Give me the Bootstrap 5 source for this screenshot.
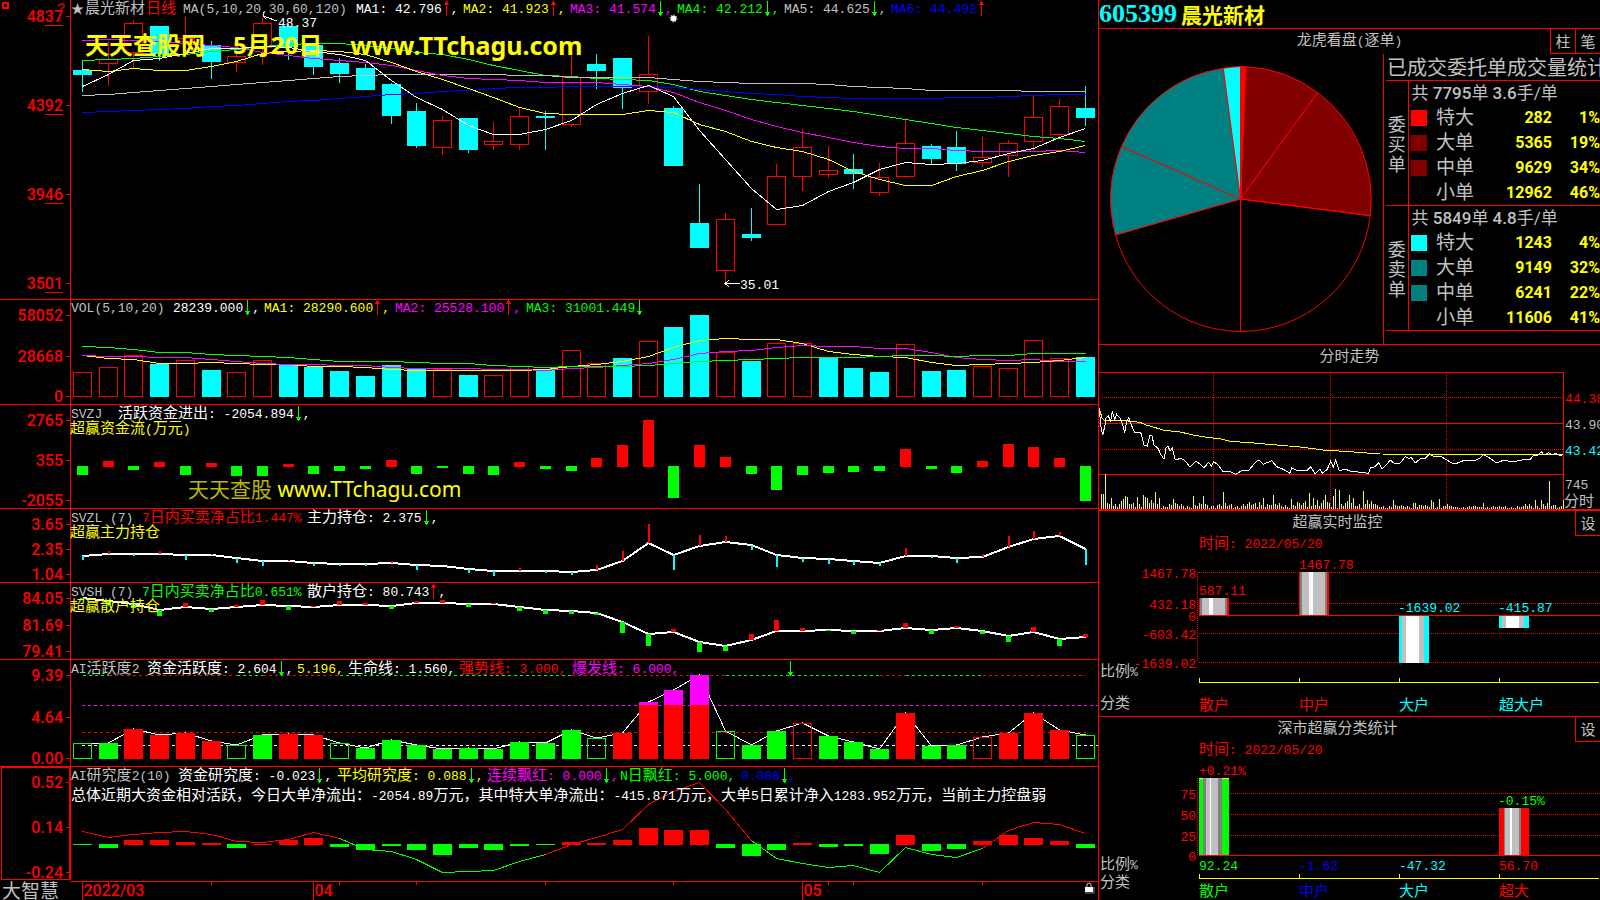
<!DOCTYPE html>
<html lang="zh-CN">
<head>
<meta charset="utf-8">
<meta name="viewport" content="width=device-width, initial-scale=1">
<title>605399 晨光新材</title>
<link rel="stylesheet" href="https://cdn.jsdelivr.net/npm/bootstrap@5.3.0/dist/css/bootstrap.min.css">
<style>
  :root { --line: #f00; --silver: #c0c0c0; }
  body { background: #000; color: var(--silver); font: 13px/16px "Liberation Mono", "Noto Sans CJK SC", monospace; }
  .desk { display: grid; grid-template-columns: 1099fr 501fr; grid-template-rows: minmax(0, 1fr); }
  .left-side { display: grid; grid-template-rows: 299fr 105fr 104fr 74fr 77fr 107fr 114fr 20fr; border-right: 1px solid var(--line); min-width: 0; }
  .right-side { display: grid; grid-template-rows: 28fr 316fr 166fr 206fr 184fr; min-width: 0; }
  .pane { position: relative; overflow: hidden; min-height: 0; min-width: 0; }
  .left-side > .pane + .pane, .right-side > .pane + .pane { border-top: 1px solid var(--line); }
  .left-side > .timebar.pane { border-top-color: transparent; }
  .plot { position: absolute; inset: 0; width: 100%; height: 100%; display: block; overflow: hidden; }
  .plot line, .plot rect, .plot polyline { shape-rendering: crispEdges; }
  .han { font-size: 15px; font-family: "Noto Sans CJK SC", sans-serif; line-height: 14px; }
  .axis { font: 500 16px Roboto, "Liberation Sans", sans-serif; fill: #f00; }
  .legend-row { position: relative; display: grid; align-items: baseline; padding-left: 71px; height: 17px; line-height: 17px; white-space: pre; }
  .sub-row { position: relative; padding-left: 70px; line-height: 14px; margin-top: -2px; white-space: pre; }
  .note-row { position: relative; padding-left: 71px; margin-top: 3px; line-height: 16px; white-space: pre; color: #fff; }
  .lg-k { grid-template-columns: 14px 61px 37px 173px repeat(6, 107px); }
  .lg-vol { grid-template-columns: 102px 91px repeat(3, 131px); }
  .lg-zj { grid-template-columns: 47px 1fr; }
  .lg-zl { grid-template-columns: 71px 165px 1fr; }
  .lg-a1 { grid-template-columns: 76px 150px 51px 111px 113px 214px 1fr; }
  .lg-a2 { grid-template-columns: 107px 159px 150px 133px 121px 1fr; }
  .arw { width: 9px; height: 15px; vertical-align: -3px; }
  .cy { color: #ff0; } .cm { color: #f0f; } .cg { color: #0f0; } .cw { color: #fff; } .cb { color: #00f; } .cr { color: #f00; } .cc { color: #0ff; }
  .mark-big { position: absolute; top: 28px; left: 85px; font: 700 24px/34px "Noto Sans", "Noto Sans CJK SC", sans-serif; color: #ff0; white-space: pre; }
  .mark-big .site { font-size: 25px; }
  .mark-small { position: absolute; bottom: 4px; left: 188px; font: 21px/30px "Noto Sans", "Noto Sans CJK SC", sans-serif; color: #ff0; white-space: pre; }
  .mark-small span { color: #b8b800; }
  .code-no { font: 700 26px/28px "Liberation Serif", serif; }
  .code-name { font: 700 21px/28px "Noto Sans CJK SC", sans-serif; }
  .brand { font: 19px/18px "Noto Sans CJK SC", sans-serif; position: relative; padding-left: 2px; }
  .head-row { position: relative; line-height: 25px; height: 25px; flex-shrink: 0; }
  .sq { width: 25px; height: 25px; padding: 0; background: #000; color: var(--silver); border: 1px solid var(--line); border-top: 0; border-right: 0; font: 15px/22px "Noto Sans CJK SC", sans-serif; }
  .stats { width: 217px; flex-shrink: 0; border-left: 1px solid var(--line); overflow: hidden; }
  .stats h2 { font: 20px/25px "Noto Sans CJK SC", sans-serif; margin: 0; padding-left: 3px; height: 26px; white-space: nowrap; }
  .orders { width: 214px; margin-left: 2px; table-layout: fixed; border-collapse: collapse; font: 500 16px/24px Roboto, "Noto Sans CJK SC", sans-serif; }
  .orders tr { height: 25px; }
  .orders tbody { border-top: 1px solid var(--line); border-bottom: 1px solid var(--line); }
  .orders td, .orders th { padding: 0; line-height: 24px; white-space: nowrap; }
  .orders .side { font: 18px/20px "Noto Sans CJK SC", sans-serif; text-align: center; vertical-align: middle; border-right: 1px solid var(--line); white-space: normal; }
  .orders .sum { font-size: 17px; font-weight: 400; padding-left: 3px; }
  .orders .sum b { font-weight: 500; }
  .orders .kind { font-size: 19px; font-weight: 400; padding-left: 6px; }
  .orders .num { color: #ff0; text-align: right; font-weight: 700; }
  .chip { display: block; width: 16px; height: 16px; margin-left: 2px; }
</style>
</head>
<body>
<svg width="0" height="0" class="position-absolute" aria-hidden="true">
  <symbol id="up" viewBox="0 0 7 15"><path d="M3 0h1v15h-1zM2 1h3v2h-3zM1 3h5v1h-5z" fill="#f00"/></symbol>
  <symbol id="dn" viewBox="0 0 7 15"><path d="M3 0h1v15h-1zM2 12h3v2h-3zM1 11h5v1h-5z" fill="#0f0"/></symbol>
</svg>

<main class="desk vh-100 overflow-hidden">
  <div class="left-side">
    <section class="pane" aria-label="日线">
      <svg class="plot" id="kline"></svg>
      <div class="legend-row lg-k">
        <span>★</span><span class="han">晨光新材</span><span class="han cr">日线</span><span>MA(5,10,20,30,60,120)</span>
        <span class="cw">MA1: 42.796<svg class="arw"><use href="#up"/></svg>,</span>
        <span class="cy">MA2: 41.923<svg class="arw"><use href="#up"/></svg>,</span>
        <span class="cm">MA3: 41.574<svg class="arw"><use href="#dn"/></svg>,</span>
        <span class="cg">MA4: 42.212<svg class="arw"><use href="#dn"/></svg>,</span>
        <span>MA5: 44.625<svg class="arw"><use href="#dn"/></svg>,</span>
        <span class="cb">MA6: 44.492<svg class="arw"><use href="#up"/></svg></span>
      </div>
      <div class="mark-big d-flex"><span class="me-4 pe-1">天天查股网</span><span class="me-4 pe-1">5月20日</span><span class="site">www.TTchagu.com</span></div>
    </section>

    <section class="pane" aria-label="成交量">
      <svg class="plot" id="vol"></svg>
      <div class="legend-row lg-vol">
        <span>VOL(5,10,20)</span><span class="cw">28239.000<svg class="arw"><use href="#dn"/></svg>,</span>
        <span class="cy">MA1: 28290.600<svg class="arw"><use href="#up"/></svg>,</span>
        <span class="cm">MA2: 25528.100<svg class="arw"><use href="#up"/></svg>,</span>
        <span class="cg">MA3: 31001.449<svg class="arw"><use href="#dn"/></svg></span>
      </div>
    </section>

    <section class="pane" aria-label="超赢资金流">
      <svg class="plot" id="flow"></svg>
      <div class="legend-row lg-zj"><span>SVZJ</span><span class="cw"><span class="han">活跃资金进出</span>: -2054.894<svg class="arw"><use href="#dn"/></svg>,</span></div>
      <div class="sub-row cy"><span class="han">超赢资金流</span>(<span class="han">万元</span>)</div>
      <div class="mark-small"><span>天天查股</span> www.TTchagu.com</div>
    </section>

    <section class="pane" aria-label="超赢主力持仓">
      <svg class="plot" id="main"></svg>
      <div class="legend-row lg-zl"><span>SVZL (7)</span><span class="cr">7<span class="han">日内买卖净占比</span>1.447%</span><span class="cw"><span class="han">主力持仓</span>: 2.375<svg class="arw"><use href="#dn"/></svg>,</span></div>
      <div class="sub-row cy"><span class="han">超赢主力持仓</span></div>
    </section>

    <section class="pane" aria-label="超赢散户持仓">
      <svg class="plot" id="retail"></svg>
      <div class="legend-row lg-zl"><span>SVSH (7)</span><span class="cg">7<span class="han">日内买卖净占比</span>0.651%</span><span class="cw"><span class="han">散户持仓</span>: 80.743<svg class="arw"><use href="#up"/></svg>,</span></div>
      <div class="sub-row cy"><span class="han">超赢散户持仓</span></div>
    </section>

    <section class="pane" aria-label="AI活跃度">
      <svg class="plot" id="active"></svg>
      <div class="legend-row lg-a1">
        <span>AI<span class="han">活跃度</span>2</span>
        <span class="cw"><span class="han">资金活跃度</span>: 2.604<svg class="arw"><use href="#dn"/></svg>,</span>
        <span class="cy">5.196,</span>
        <span class="cw"><span class="han">生命线</span>: 1.560,</span>
        <span class="cr"><span class="han">强势线</span>: 3.000,</span>
        <span class="cm"><span class="han">爆发线</span>: 6.000,</span>
        <span><svg class="arw"><use href="#dn"/></svg></span>
      </div>
    </section>

    <section class="pane" aria-label="AI研究度">
      <svg class="plot" id="study"></svg>
      <div class="legend-row lg-a2">
        <span>AI<span class="han">研究度</span>2(10)</span>
        <span class="cw"><span class="han">资金研究度</span>: -0.023<svg class="arw"><use href="#dn"/></svg>,</span>
        <span class="cy"><span class="han">平均研究度</span>: 0.088<svg class="arw"><use href="#dn"/></svg>,</span>
        <span class="cm"><span class="han">连续飘红</span>: 0.000<svg class="arw"><use href="#dn"/></svg>,</span>
        <span class="cg">N<span class="han">日飘红</span>: 5.000,</span>
        <span class="cb">0.088<svg class="arw"><use href="#dn"/></svg>,</span>
      </div>
      <div class="note-row"><span class="han">总体近期大资金相对活跃，今日大单净流出：</span>-2054.89<span class="han">万元，其中特大单净流出：</span>-415.871<span class="han">万元，大单</span>5<span class="han">日累计净入</span>1283.952<span class="han">万元，当前主力控盘弱</span></div>
    </section>

    <footer class="pane timebar">
      <svg class="plot" id="dates"></svg>
      <div class="brand">大智慧</div>
    </footer>
  </div>

  <div class="right-side">
    <header class="pane d-flex"><span class="code-no cc">605399</span><span class="code-name cy ps-1">晨光新材</span></header>

    <section class="pane d-flex flex-column">
      <div class="head-row text-center"><span class="han">龙虎看盘</span>(<span class="han">逐单</span>)
        <div class="position-absolute top-0 end-0 d-flex"><button type="button" class="sq">柱</button><button type="button" class="sq">笔</button></div>
      </div>
      <div class="d-flex flex-grow-1 overflow-hidden">
        <div class="flex-grow-1 overflow-hidden">
          <svg viewBox="0 0 284 290" class="d-block w-100 h-100" stroke="#f00" fill="none">
            <path fill="#f00" d="M141.5 145V12.5L147 12.7Z"/>
            <path fill="#800000" d="M141.5 145 147 12.7A130.5 132.5 0 0 1 218.7 38.7Z"/>
            <path fill="#800000" d="M141.5 145 218.7 38.7A130.5 132.5 0 0 1 271.3 161.7Z"/>
            <path d="M141.5 145 271.3 161.7A130.5 132.5 0 0 1 141.5 277.5Z"/>
            <path d="M141.5 145V277.5A130.5 132.5 0 0 1 16.5 181Z"/>
            <path fill="#008080" d="M141.5 145 16.5 181A130.5 132.5 0 0 1 22.5 92.5Z"/>
            <path fill="#008080" d="M141.5 145 22.5 92.5A130.5 132.5 0 0 1 124.3 14.3Z"/>
            <path fill="#0ff" d="M141.5 145 124.3 14.3A130.5 132.5 0 0 1 141.5 12.5Z"/>
            <path stroke-width="2" d="M142 13V145"/>
          </svg>
        </div>
        <div class="stats">
          <h2>已成交委托单成交量统计</h2>
          <table class="orders">
            <colgroup><col style="width:22px"><col style="width:22px"><col><col style="width:72px"><col style="width:48px"></colgroup>
            <tbody>
              <tr><th class="side" rowspan="5">委<br>买<br>单</th><th class="sum" colspan="4">共 <b>7795</b>单 <b>3.6</b>手/单</th></tr>
              <tr><td><i class="chip" style="background:#f00"></i></td><th class="kind">特大</th><td class="num">282</td><td class="num">1%</td></tr>
              <tr><td><i class="chip" style="background:#800000"></i></td><th class="kind">大单</th><td class="num">5365</td><td class="num">19%</td></tr>
              <tr><td><i class="chip" style="background:#800000"></i></td><th class="kind">中单</th><td class="num">9629</td><td class="num">34%</td></tr>
              <tr><td></td><th class="kind">小单</th><td class="num">12962</td><td class="num">46%</td></tr>
            </tbody>
            <tbody>
              <tr><th class="side" rowspan="5">委<br>卖<br>单</th><th class="sum" colspan="4">共 <b>5849</b>单 <b>4.8</b>手/单</th></tr>
              <tr><td><i class="chip" style="background:#0ff"></i></td><th class="kind">特大</th><td class="num">1243</td><td class="num">4%</td></tr>
              <tr><td><i class="chip" style="background:#008080"></i></td><th class="kind">大单</th><td class="num">9149</td><td class="num">32%</td></tr>
              <tr><td><i class="chip" style="background:#008080"></i></td><th class="kind">中单</th><td class="num">6241</td><td class="num">22%</td></tr>
              <tr><td></td><th class="kind">小单</th><td class="num">11606</td><td class="num">41%</td></tr>
            </tbody>
          </table>
        </div>
      </div>
    </section>

    <section class="pane" aria-label="分时走势">
      <svg class="plot" id="intraday"></svg>
      <div class="head-row text-center"><span class="han">分时走势</span></div>
    </section>

    <section class="pane" aria-label="超赢实时监控">
      <svg class="plot" id="monitor"></svg>
      <div class="head-row text-center pe-4"><span class="han">超赢实时监控</span>
        <button type="button" class="sq position-absolute top-0 end-0">设</button>
      </div>
    </section>

    <section class="pane" aria-label="深市超赢分类统计">
      <svg class="plot" id="sector"></svg>
      <div class="head-row text-center pe-4"><span class="han">深市超赢分类统计</span>
        <button type="button" class="sq position-absolute top-0 end-0">设</button>
      </div>
    </section>
  </div>
</main>

<script src="https://cdn.jsdelivr.net/npm/bootstrap@5.3.0/dist/js/bootstrap.bundle.min.js"></script>
<script>
const RED = '#f00', GREEN = '#0f0', CYAN = '#0ff', YEL = '#ff0', MAG = '#f0f', BLUE = '#00f', WHITE = '#fff', SILVER = '#c0c0c0', GREY = '#808080';
const charts = [];

// Each chart is drawn in its own units (box = x, y, width, height) and scaled to the pane; text keeps its size.
function chart(id, box, draw) { charts.push({ el: document.getElementById(id), box, draw }); }
function pen(el, [x0, y0, w, h]) {
  const sx = el.clientWidth / w, sy = el.clientHeight / h;
  const X = x => +((x - x0) * sx).toFixed(1), Y = y => +((y - y0) * sy).toFixed(1);
  let out = '';
  return {
    line(a, b, c, d, col, dash, sw) { out += `<line x1="${X(a)}" y1="${Y(b)}" x2="${X(c)}" y2="${Y(d)}" stroke="${col}" stroke-width="${sw || 1}"${dash ? ` stroke-dasharray="${dash}"` : ''}/>`; },
    fill(a, b, ww, hh, col) { out += `<rect x="${X(a)}" y="${Y(b)}" width="${(ww * sx).toFixed(1)}" height="${Math.max(1, hh * sy).toFixed(1)}" fill="${col}"/>`; },
    box(a, b, ww, hh, col) { out += `<rect x="${X(a)}" y="${Y(b)}" width="${(ww * sx).toFixed(1)}" height="${Math.max(1, hh * sy).toFixed(1)}" fill="none" stroke="${col}"/>`; },
    path(pts, col, sw) { out += `<polyline points="${pts.map(p => X(p[0]) + ',' + Y(p[1])).join(' ')}" fill="none" stroke="${col}" stroke-width="${sw || 1}"/>`; },
    axis(t, x, y, anchor) { out += `<text class="axis" x="${X(x)}" y="${Y(y) + 6}" text-anchor="${anchor || 'end'}">${t}</text>`; },
    text(t, x, y, col, anchor) {
      const body = t.replace(/[\u4e00-\u9fff]+/g, s => `<tspan class="han">${s}</tspan>`);
      out += `<text x="${X(x)}" y="${Y(y) + 5}" fill="${col}" text-anchor="${anchor || 'start'}">${body}</text>`;
    },
    raw(s) { out += s; }, X, Y,
    done() { el.innerHTML = out; }
  };
}
const cx = i => Math.round(82.5 + i * 25.715 - 0.5) + 0.5;
const series = ys => ys.map((y, i) => [cx(i), y]);
function scale(p, top, bottom, marks) {
  p.line(70.5, top, 70.5, bottom, RED);
  marks.forEach(([t, y]) => { p.axis(t, 63, y); p.line(66, y + 0.5, 70, y + 0.5, RED); });
}

// top, bottom, high, low, up?
const candles = [[70,75,60,92,0],[59,63,41,86,1],[23,52,20,68,1],[26,54,26,61,0],[38,41,17,42,1],[45,62,41,79,0],[56,62,54,72,1],[23,47,17,65,1],[26,47,24,60,0],[45,67,45,75,0],[63,74,58,83,0],[68,90,64,90,0],[84,116,83,124,0],[111,146,103,148,0],[120,147,116,155,1],[118,150,118,153,0],[141,144,122,150,1],[116,144,107,150,1],[116,118,111,150,0],[77,124,53,127,1],[64,71,54,89,0],[58,88,58,109,0],[74,91,36,104,1],[108,166,106,166,0],[223,248,184,248,0],[219,270,213,283,1],[234,238,208,241,0],[176,224,164,224,1],[147,176,129,191,1],[170,174,146,178,1],[169,174,154,189,0],[177,192,163,196,1],[143,176,118,178,1],[146,159,144,164,0],[147,164,131,171,0],[157,162,136,167,1],[143,155,140,177,1],[117,141,96,150,1],[106,134,99,137,1],[108,118,86,126,0]];
const ma = {
  [GREEN]: [60,59,58,56,54,51,49,46,44,43,43,45,48,52,54,59,65,70,75,76,78,79,80,84,91,95,99,102,105,108,111,115,119,123,127,130,133,136,138,141],
  [SILVER]: [95,94,92,90,88,86,84,82,80,78,76,75,74,74,74,74,74,75,75,77,77,77,77,79,81,82,83,83,83,84,86,87,88,90,90,90,90,91,91,91],
  [BLUE]: [112,111,110,109,108,106,105,103,101,100,98,96,94,93,91,90,88,87,87,86,86,86,86,87,89,91,93,94,96,97,98,98,98,98,97,97,96,95,94,94],
  [MAG]: [40,39,40,41,43,45,47,52,55,58,60,62,65,70,75,78,79,80,82,82,82,84,86,92,102,110,119,126,132,137,142,146,148,148,150,151,151,151,150,152],
  [YEL]: [69,71,68,70,70,66,61,53,51,50,51,54,62,71,79,88,97,107,113,114,114,114,110,112,124,131,141,147,151,159,171,179,185,185,176,170,161,155,151,145],
  [WHITE]: [86,74,60,58,53,48,48,46,47,51,54,60,80,97,109,125,134,134,129,120,104,93,85,96,130,159,188,209,205,191,182,169,162,164,163,160,153,148,137,128]
};
chart('kline', [0, 0, 1098, 299], p => {
  scale(p, 0, 299, [['4837',16],['4392',105],['3946',194],['3501',283]]);
  [16,105,194,283].forEach(y => p.line(45, y + 9.5, 63, y + 9.5, RED));
  p.raw(`<rect x="3" y="3" width="5" height="5" fill="none" stroke="#f00" stroke-width="2"/><text x="57" y="13" fill="#c00000" style="font:bold 14px 'Liberation Mono'">?</text>`);
  candles.forEach(([t, b, h, l, up], i) => {
    const x = cx(i);
    if (up) { p.line(x, h, x, t, RED); p.line(x, b, x, l, RED); p.box(x - 9, t + .5, 18, b - t, RED); }
    else { p.line(x, h, x, l, CYAN); p.fill(x - 9.5, t, 19, b - t, CYAN); }
  });
  Object.entries(ma).forEach(([c, ys]) => p.path(series(ys.map(y => y + .5)), c));
  p.path([[277,21],[263,16]], WHITE); p.path([[264,12],[263,16],[266,19]], WHITE);
  p.text('48.37', 278, 22, WHITE);
  p.path([[740,283.5],[725,283.5]], WHITE); p.path([[729,280],[725,283.5],[729,287]], WHITE);
  p.text('35.01', 740, 284, WHITE);
  const sx = p.X(673.5), sy = p.Y(18.5);
  p.raw(`<circle cx="${sx}" cy="${sy}" r="3" fill="#fff"/><circle cx="${sx}" cy="${sy}" r="3.5" fill="none" stroke="#fff" stroke-dasharray="1 1.7"/>`);
});

// 1 = outlined rising day, 0 = solid falling day
const volUp = '1110101100000010110110100101100010011110';
const volH = [25,30,42,33,37,27,25,37,33,30,26,21,32,28,28,22,22,31,28,47,34,39,56,70,82,45,36,54,54,39,29,25,53,26,27,31,29,57,39,40];
const volMa = {
  [YEL]: [355,358,359,363,363,362,363,364,364,366,366,367,369,370,370,370,370,370,369,366,364,361,356,347,340,338,339,339,343,351,354,356,357,362,365,364,363,362,360,357],
  [MAG]: [355,356,356,357,357,359,361,363,364,364,365,365,367,368,368,368,369,369,370,368,367,365,363,359,353,351,350,347,345,346,346,348,348,352,357,359,360,359,361,361],
  [GREEN]: [346,347,349,352,352,354,355,356,357,359,361,361,361,362,363,363,365,366,367,366,366,366,365,363,361,360,359,358,357,357,357,356,355,355,356,355,355,353,353,353]
};
chart('vol', [0, 300, 1098, 104], p => {
  scale(p, 299, 404, [['58052',315],['28668',356],['0',396]]);
  volH.forEach((h, i) => volUp[i] === '1' ? p.box(cx(i) - 9, 396.5 - h + 1, 18, h - 1, RED) : p.fill(cx(i) - 9.5, 397 - h, 19, h, CYAN));
  Object.entries(volMa).forEach(([c, ys]) => p.path(series(ys.map(y => y + .5)), c));
});

chart('flow', [0, 405, 1098, 103], p => {
  scale(p, 404, 508, [['2765',420],['355',460],['-2055',500]]);
  [-9,6,-4,5,-9,4,-10,-10,3,-8,-5,-3,7,-8,-2,-8,-9,5,-3,-5,9,22,47,-32,22,10,-8,-24,-9,-7,-6,-5,18,-3,-7,6,23,20,9,-35]
    .forEach((v, i) => v > 0 ? p.fill(cx(i) - 5.5, 467 - v, 11, v, RED) : p.fill(cx(i) - 5.5, 466, 11, -v, GREEN));
});

const mainY = [556,554,554,554,555,555,558,561,561,563,564,564,563,565,566,569,571,571,571,572,570,561,543,555,546,542,545,555,558,559,561,563,556,556,558,557,547,539,536,549];
const mainD = [-3,3,-1,3,-4,1,-4,-4,1,-2,-1,-1,2,-4,0,-3,-4,3,-1,-2,5,10,19,-14,11,6,-4,-11,-3,-4,-3,-2,8,-1,-4,3,11,8,4,-15];
chart('main', [0, 509, 1098, 73], p => {
  scale(p, 508, 582, [['3.65',524],['2.35',549],['1.04',574]]);
  p.path(series(mainY), WHITE, 2);
  mainD.forEach((d, i) => d && (d > 0 ? p.fill(cx(i) - 1, mainY[i] - d, 2, d, RED) : p.fill(cx(i) - 1, mainY[i], 2, 1 - d, CYAN)));
});

const retY = [598,601,604,610,607,609,607,605,606,607,605,605,606,603,603,604,604,607,610,611,613,622,634,632,642,646,640,631,631,630,631,631,628,630,628,631,636,632,639,637];
const retD = [-1,-4,-4,-6,4,-3,2,5,-4,1,4,2,-3,2,3,-3,1,-4,-4,-3,-2,-11,-12,3,-10,-5,6,11,3,-1,-3,1,5,-4,2,-3,-6,5,-7,3];
chart('retail', [0, 583, 1098, 76], p => {
  scale(p, 582, 659, [['84.05',598],['81.69',625],['79.41',651]]);
  p.path(series(retY), WHITE, 2);
  retD.forEach((d, i) => d > 0 ? p.fill(cx(i) - 2.5, retY[i] - d, 5, d, RED) : p.fill(cx(i) - 2.5, retY[i], 5, -d, GREEN));
});

// g / r solid bars, G / R outlined bars
const actK = 'GgrrrrGgrrGgggggggggGrrrrGggRgggrggRrrrG';
const actH = [16,16,30,24,26,18,14,24,25,24,16,11,19,14,10,11,10,17,16,29,21,26,57,69,84,28,14,28,36,23,17,10,46,13,14,22,26,46,29,24];
chart('active', [0, 660, 1098, 106], p => {
  scale(p, 659, 766, [['9.39',675],['4.64',717],['0.00',758]]);
  [[0,1,GREEN],[1,6,RED],[6,7,GREEN],[7,10,RED],[10,19,GREEN],[19,25,RED],[25,31,GREEN],[31,32,RED],[32,35,GREEN],[35,39,RED]]
    .forEach(([a, b, c]) => p.line(cx(a), 675.5, cx(b), 675.5, c, '3 3'));
  p.line(82, 705.5, 1098, 705.5, MAG, '3 3');
  p.line(82, 732.5, 1086, 732.5, RED, '3 3');
  p.line(82, 745.5, 1098, 745.5, WHITE, '3 3');
  p.path(series(actH.map(h => 759 - h)), WHITE);
  actH.forEach((h, i) => {
    const k = actK[i], c = k.toLowerCase() === 'g' ? GREEN : RED;
    if (k !== k.toLowerCase()) return p.box(cx(i) - 9, 758.5 - h + 1, 18, h - 1, c);
    p.fill(cx(i) - 9.5, 759 - h, 19, h, c);
    if (h > 54) p.fill(cx(i) - 9.5, 759 - h, 19, h - 54, MAG);
  });
});

const stY = [831,837,834,832,831,834,841,842,839,832,838,849,851,859,872,871,870,861,854,844,837,829,804,791,782,809,840,858,863,867,865,872,847,854,857,848,830,822,824,833];
chart('study', [0, 767, 1098, 113], p => {
  scale(p, 766, 880, [['0.52',782],['0.14',827],['-0.24',872]]);
  p.box(1.5, 767.5, 68, 112, RED);
  [-1,-4,5,5,3,2,-4,1,5,7,-3,-6,-2,-6,-11,-4,-6,-2,-1,3,2,5,17,15,15,-4,-12,-6,2,-3,-2,-10,10,-7,-5,4,10,7,4,-4]
    .forEach((v, i) => v > 0 ? p.fill(cx(i) - 9.5, 845 - v, 19, v, RED) : p.fill(cx(i) - 9.5, 844, 19, -v, GREEN));
  const s = series(stY.map(y => y + .5));
  [[0,10,RED],[10,18,GREEN],[18,26,RED],[26,35,GREEN],[35,39,RED]].forEach(([a, b, c]) => p.path(s.slice(a, b + 1), c));
});

chart('dates', [0, 881, 1098, 19], p => {
  p.line(70, 881.5, 1098, 881.5, RED);
  [[0,'2022/03'],[9,'04'],[28,'05']].forEach(([i, t]) => { p.line(cx(i), 880, cx(i), 900, RED); p.axis(t, cx(i) + 1, 890, 'start'); });
  [1,5,10,13,18,23,29,30,35].forEach(i => p.line(cx(i), 880, cx(i), 885, RED));
  const x = p.X(1085), y = p.Y(882);
  p.raw(`<g transform="translate(${x} ${y})"><path d="M2 5V2Q4 0 6 2V5" fill="none" stroke="#c0c0c0"/><rect x="0" y="5" width="8" height="5" fill="#fff"/><path d="M0 11H9V5" fill="none" stroke="#808080"/></g>`);
});

// Intraday traces are sampled on a grid of three steps per unit.
const price = '28,220 32,270 38,300 44,275 48,250 55,243 62,258 67,228 74,255 80,238 90,250 98,268 104,295 110,258 116,248 124,270 134,292 152,292 162,330 172,333 180,300 186,303 192,330 204,340 212,358 222,373 228,340 234,333 240,348 247,340 256,375 272,370 285,377 300,396 318,378 330,387 342,398 356,382 364,393 371,380 384,390 400,410 420,410 437,418 455,407 475,407 500,378 509,377 520,388 545,377 560,395 580,403 600,415 605,398 620,406 650,408 662,395 675,417 690,403 696,415 712,403 722,378 730,397 737,375 748,407 765,402 780,408 835,415 842,398 855,395 866,383 877,402 890,388 901,375 915,387 930,385 946,365 955,370 964,368 976,384 990,372 1005,370 1019,357 1030,364 1055,366 1085,384 1100,385 1120,377 1150,378 1170,370 1180,358 1200,370 1220,384 1240,376 1270,380 1300,374 1320,374 1330,361 1345,360 1354,350 1362,360 1376,353 1385,360 1395,355 1410,361 1420,359';
const avg = '28,222 36,248 44,257 60,255 100,255 120,259 150,262 168,270 190,276 222,286 270,291 310,300 350,307 390,311 420,319 480,323 550,329 630,336 700,345 780,350 870,357 1080,358 1320,359 1420,359';
const spikes = {32:15,38:15,44:35,62:11,98:10,104:13,110:12,142:12,160:14,166:12,172:11,196:17,208:11,248:10,308:13,340:13,400:17,506:7,520:11,550:14,604:10,644:8,656:16,668:11,680:9,698:9,704:14,730:13,736:20,748:19,778:14,790:11,820:18,832:9,908:9,970:6,976:6,1022:9,1028:7,1046:10,1070:5,1175:8,1180:6,1336:9,1354:9,1378:28,1420:9};
const trace = s => s.split(' ').map(q => q.split(',').map(Number)).map(([x, y]) => [1090 + x / 3, 335 + y / 3]);
chart('intraday', [1099, 345, 501, 165], p => {
  p.line(1099, 372.5, 1563, 372.5, RED); p.line(1563.5, 372, 1563.5, 509, RED);
  [397.5, 449.5].forEach(y => p.line(1100, y, 1563, y, RED, '1 1'));
  p.line(1099, 423.5, 1563, 423.5, RED); p.line(1099, 474.5, 1563, 474.5, RED);
  [1213.5, 1330.5, 1446.5].forEach(x => p.line(x, 373, x, 509, RED, '1 1'));
  for (let x = 32; x <= 1420; x += 6) {
    const amp = x < 200 ? 9 : x < 460 ? 6 : x < 700 ? 7 : x < 860 ? 8 : x < 1060 ? 4 : x < 1300 ? 3 : 6;
    const near = Object.keys(spikes).find(k => Math.abs(k - x) < 3);
    const h = near ? spikes[near] : 1 + Math.floor(amp * (0.5 + 0.5 * Math.sin(x * 1.7) * Math.cos(x * 0.31)));
    p.fill(Math.round(1090 + x / 3), 509 - h, 1, h, YEL);
  }
  p.path(trace(avg), YEL); p.path(trace(price), WHITE);
  p.line(1099, 509.5, 1600, 509.5, RED);
  p.text('44.38', 1565, 398, RED); p.text('43.90', 1565, 424, SILVER); p.text('43.42', 1565, 450, CYAN);
  p.text('745', 1565, 484, SILVER); p.text('分时', 1564, 501, SILVER);
});

function column(p, x, y, h, bands) { bands.forEach(([w, c]) => { p.fill(x, y, w, h, c); x += w; }); }
function category(p, y, count) {
  p.line(1199, y + .5, 1599, y + .5, YEL);
  for (let i = 0; i < count; i++) p.line(1199.5 + i * 100, y - 4, 1199.5 + i * 100, y, YEL);
}
const hot = [[1,RED],[2,GREY],[7,SILVER],[4,WHITE],[12,SILVER],[2,GREY],[2,RED]];
const cold = [[3,CYAN],[4,SILVER],[13,WHITE],[5,SILVER],[5,CYAN]];
chart('monitor', [1099, 511, 501, 205], p => {
  p.text('时间: 2022/05/20', 1199, 543, RED);
  [['1467.78',573],['432.18',604],['0',616],['-603.42',634],['-1639.02',663]].forEach(([t, y]) => p.text(t, 1196, y, RED, 'end'));
  p.line(1197.5, 572, 1197.5, 662, RED, '1 1');
  [572.5, 603.5, 633.5, 662.5].forEach(y => p.line(1199, y, 1600, y, RED, '1 1'));
  column(p, 1199, 598, 17, hot); column(p, 1299, 572, 43, hot);
  column(p, 1399, 616, 47, cold); column(p, 1499, 616, 12, cold);
  p.line(1199, 615.5, 1600, 615.5, RED);
  p.text('587.11', 1199, 590, RED); p.text('1467.78', 1299, 564, RED);
  p.text('-1639.02', 1398, 607, CYAN); p.text('-415.87', 1498, 607, CYAN);
  category(p, 682, 4);
  [['散户',RED],['中户',RED],['大户',CYAN],['超大户',CYAN]].forEach(([t, c], i) => p.text(t, 1199 + i * 100, 705, c));
  p.text('比例%', 1100, 671, SILVER); p.text('分类', 1100, 703, SILVER);
});
chart('sector', [1099, 717, 501, 183], p => {
  p.text('时间: 2022/05/20', 1199, 749, RED);
  p.text('+0.21%', 1199, 770, RED); p.text('-0.15%', 1498, 800, GREEN);
  [['75',794],['50',815],['25',836],['0',856]].forEach(([t, y]) => p.text(t, 1196, y, RED, 'end'));
  p.line(1197.5, 778, 1197.5, 855, RED, '1 1');
  [793.5, 814.5, 835.5].forEach(y => p.line(1199, y, 1600, y, RED, '1 1'));
  column(p, 1199, 778, 77, [[4,GREEN],[3,GREY],[4,SILVER],[1,WHITE],[7,SILVER],[4,GREY],[7,GREEN]]);
  p.line(1199, 778.5, 1203, 778.5, YEL); p.line(1222, 778.5, 1229, 778.5, YEL);
  column(p, 1499, 808, 47, [[5,RED],[1,GREY],[5,SILVER],[2,WHITE],[7,SILVER],[2,GREY],[8,RED]]);
  p.line(1199, 855.5, 1600, 855.5, RED);
  [['92.24',GREEN],['-1.62',BLUE],['-47.32',CYAN],['56.70',RED]].forEach(([t, c], i) => p.text(t, 1199 + i * 100, 865, c));
  category(p, 878, 4);
  [['散户',GREEN],['中户',BLUE],['大户',CYAN],['超大',RED]].forEach(([t, c], i) => p.text(t, 1199 + i * 100, 891, c));
  p.text('比例%', 1100, 864, SILVER); p.text('分类', 1100, 882, SILVER);
});

function renderAll() { charts.forEach(c => { const p = pen(c.el, c.box); c.draw(p); p.done(); }); }
renderAll();
addEventListener('resize', renderAll);
</script>
</body>
</html>
